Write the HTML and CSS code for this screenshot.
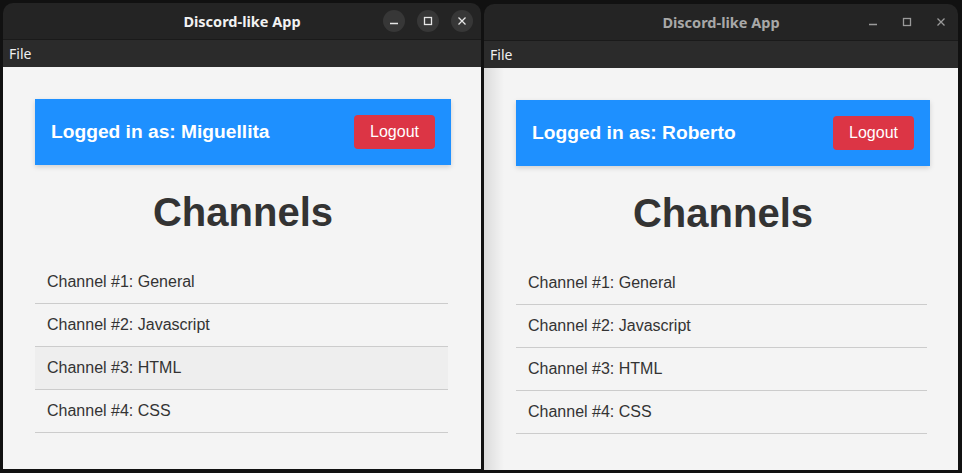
FILE: index.html
```html
<!DOCTYPE html>
<html lang="en">
<head>
    <meta charset="UTF-8">
    <meta name="viewport" content="width=device-width, initial-scale=1.0">
    <title>Discord-like App</title>
    <link rel="stylesheet" href="styles.css">
</head>
<body>
<div class="window window-focused">
    <div class="titlebar">
        <span class="title">Discord-like App</span>
        <div class="controls">
            <span class="ctrl">
                <svg viewBox="0 0 10 10" width="10" height="10"><path d="M1 7.5h8" /></svg>
            </span>
            <span class="ctrl">
                <svg viewBox="0 0 10 10" width="10" height="10"><rect x="1.5" y="1.5" width="7" height="7" /></svg>
            </span>
            <span class="ctrl">
                <svg viewBox="0 0 10 10" width="10" height="10"><path d="M1.5 1.5l7 7M8.5 1.5l-7 7" /></svg>
            </span>
        </div>
    </div>
    <div class="menubar">File</div>
    <main class="content">
        <div class="user-bar">
            <span class="user-name">Logged in as: Miguellita</span>
            <button class="logout">Logout</button>
        </div>
        <h1 class="channels-title">Channels</h1>
        <ul class="channel-list">
            <li>Channel #1: General</li>
            <li>Channel #2: Javascript</li>
            <li class="hover">Channel #3: HTML</li>
            <li>Channel #4: CSS</li>
        </ul>
    </main>
</div>

<div class="window window-back">
    <div class="titlebar">
        <span class="title">Discord-like App</span>
        <div class="controls">
            <span class="ctrl">
                <svg viewBox="0 0 10 10" width="10" height="10"><path d="M1 7.5h8" /></svg>
            </span>
            <span class="ctrl">
                <svg viewBox="0 0 10 10" width="10" height="10"><rect x="1.5" y="1.5" width="7" height="7" /></svg>
            </span>
            <span class="ctrl">
                <svg viewBox="0 0 10 10" width="10" height="10"><path d="M1.5 1.5l7 7M8.5 1.5l-7 7" /></svg>
            </span>
        </div>
    </div>
    <div class="menubar">File</div>
    <main class="content">
        <div class="user-bar">
            <span class="user-name">Logged in as: Roberto</span>
            <button class="logout">Logout</button>
        </div>
        <h1 class="channels-title">Channels</h1>
        <ul class="channel-list">
            <li>Channel #1: General</li>
            <li>Channel #2: Javascript</li>
            <li>Channel #3: HTML</li>
            <li>Channel #4: CSS</li>
        </ul>
    </main>
</div>
</body>
</html>
```

FILE: styles.css
```css
html, body {
    height: 100%;
}

body {
    margin: 0;
    padding: 3px 0 0 3px;
    box-sizing: border-box;
    background-color: #111;
    display: flex;
    align-items: flex-start;
    gap: 3px;
    overflow: hidden;
    font-family: "Liberation Sans", Arial, sans-serif;
}

.window {
    display: flex;
    flex-direction: column;
    height: 466px;
    border-radius: 10px 10px 0 0;
    overflow: hidden;
}

.window-focused {
    width: 478px;
}

.window-back {
    width: 474px;
    margin-top: 1px;
}

.titlebar {
    height: 36px;
    background-color: #242424;
    border-bottom: 1px solid #1a1a1a;
    display: flex;
    align-items: center;
    justify-content: center;
    position: relative;
}

.title {
    font-family: "Noto Sans", "DejaVu Sans", sans-serif;
    font-weight: bold;
    font-size: 14.5px;
    color: #f2f2f2;
}

.window-back .title {
    color: #a8a8a8;
}

.controls {
    position: absolute;
    right: 8px;
    top: 7px;
    display: flex;
    gap: 12px;
}

.ctrl {
    width: 22px;
    height: 22px;
    border-radius: 50%;
    background-color: #373737;
    display: flex;
    align-items: center;
    justify-content: center;
}

.ctrl svg {
    fill: none;
    stroke: #e6e6e6;
    stroke-width: 1.3;
}

.window-back .controls {
    right: 6px;
}

.window-back .ctrl {
    background-color: transparent;
}

.window-back .ctrl svg {
    stroke: #9a9a9a;
}

.menubar {
    height: 27px;
    line-height: 27px;
    background-color: #2b2b2b;
    color: #f0f0f0;
    font-family: "Noto Sans", "DejaVu Sans", sans-serif;
    font-size: 14px;
    padding-left: 6px;
}

.content {
    flex: 1;
    background-color: #f4f4f4;
    padding: 32px 30px 0 32px;
    color: #333;
}

.window-back .content {
    background-image: linear-gradient(to right, rgba(0, 0, 0, 0.1), rgba(0, 0, 0, 0) 20px);
    padding-right: 28px;
}

.user-bar {
    height: 66px;
    background-color: #1e90ff;
    display: flex;
    align-items: center;
    justify-content: space-between;
    padding: 0 16px;
    box-shadow: 0 2px 5px rgba(0, 0, 0, 0.15);
}

.user-name {
    color: white;
    font-weight: bold;
    font-size: 19.2px;
}

.logout {
    font-family: "Liberation Sans", Arial, sans-serif;
    font-size: 16px;
    line-height: 18px;
    padding: 8px 16px;
    background-color: #dc3545;
    color: white;
    border: none;
    border-radius: 4px;
    cursor: pointer;
}

.channels-title {
    text-align: center;
    font-size: 40px;
    line-height: 46px;
    margin: 24px 0 26px;
    color: #333;
}

.channel-list {
    list-style: none;
    margin: 0 3px 0 0;
    padding: 0;
}

.channel-list li {
    padding: 12px;
    line-height: 18px;
    font-size: 16px;
    border-bottom: 1px solid #ccc;
}

.channel-list li.hover {
    background-color: #eeeeee;
}
```
